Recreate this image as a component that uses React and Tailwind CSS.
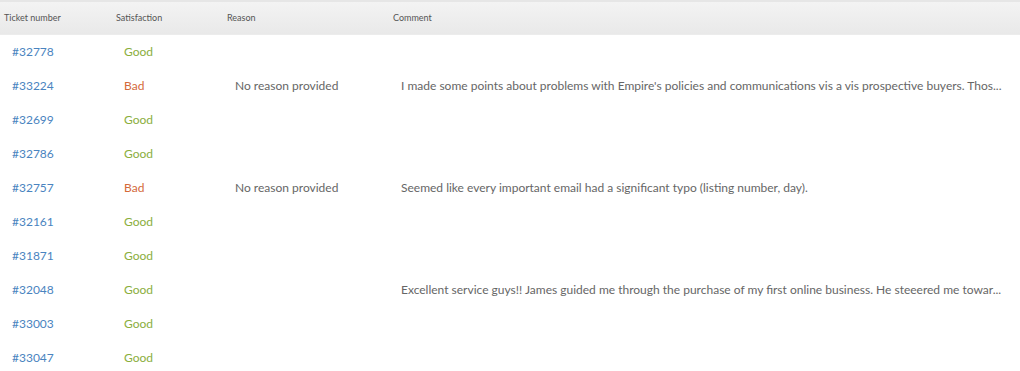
import React from 'react';

const rows = [
  { id: '#32778', rating: 'Good' },
  {
    id: '#33224',
    rating: 'Bad',
    reason: 'No reason provided',
    comment:
      "I made some points about problems with Empire's policies and communications vis a vis prospective buyers. Thos...",
  },
  { id: '#32699', rating: 'Good' },
  { id: '#32786', rating: 'Good' },
  {
    id: '#32757',
    rating: 'Bad',
    reason: 'No reason provided',
    comment: 'Seemed like every important email had a significant typo (listing number, day).',
  },
  { id: '#32161', rating: 'Good' },
  { id: '#31871', rating: 'Good' },
  {
    id: '#32048',
    rating: 'Good',
    comment:
      'Excellent service guys!! James guided me through the purchase of my first online business. He steeered me towar...',
  },
  { id: '#33003', rating: 'Good' },
  { id: '#33047', rating: 'Good' },
];

const cols = 'grid grid-cols-[112px_111px_166px_1fr]';

function App() {
  return (
    <div className="w-[1020px] h-[371px] overflow-hidden bg-white font-['Lato','Open_Sans',sans-serif]">
      {/* Header */}
      <div
        className={`${cols} h-[35px] items-center border-t-2 border-[#e6e6e6] bg-gradient-to-b from-[#f3f3f3] to-[#e9e9e9] border-b border-b-[#ececec] text-[9px] text-[#555]`}
      >
        <div className="pl-[4px]">Ticket number</div>
        <div className="pl-[4px]">Satisfaction</div>
        <div className="pl-[4px]">Reason</div>
        <div className="pl-[4px]">Comment</div>
      </div>

      {/* Rows */}
      {rows.map((r) => (
        <div key={r.id} className={`${cols} h-[34px] items-center text-[12px]`}>
          <div className="pl-[12px] text-[#4a84c0]">{r.id}</div>
          <div className={`pl-[12px] ${r.rating === 'Good' ? 'text-[#8aae3c]' : 'text-[#d4693a]'}`}>
            {r.rating}
          </div>
          <div className="pl-[12px] text-[#666]">{r.reason}</div>
          <div className="pl-[12px] text-[#666] whitespace-nowrap">{r.comment}</div>
        </div>
      ))}
    </div>
  );
}

export default App;
